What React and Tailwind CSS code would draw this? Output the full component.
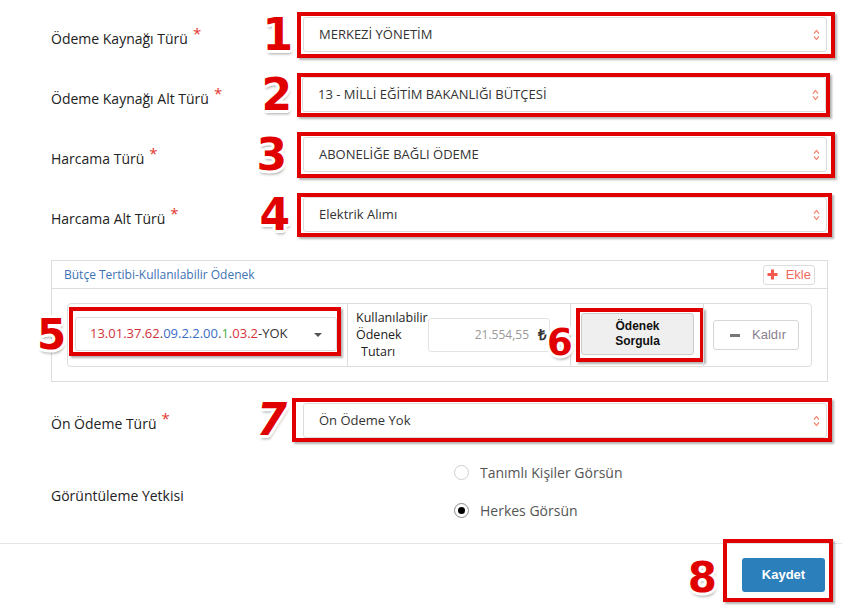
import React from 'react';

const OPEN = "font-['Open_Sans',sans-serif]";
const ARIAL = "font-['Liberation_Sans',Arial,sans-serif]";

// red annotation digit with white outline and soft grey drop shadow
const Num = ({ n, className = '' }) => (
  <span
    className={`font-['DejaVu_Sans',sans-serif] font-bold leading-none text-[#e10000] [text-shadow:-2px_-2px_0_#fff,2px_-2px_0_#fff,-2px_2px_0_#fff,2px_2px_0_#fff,0_3px_0_#fff,3px_0_0_#fff,-3px_0_0_#fff,0_-3px_0_#fff,1px_4px_3px_rgba(0,0,0,0.35)] ${className}`}
  >
    {n}
  </span>
);

const Arrows = () => (
  <svg width="7" height="11" viewBox="0 0 7 11" className="absolute right-[6px] top-1/2 -translate-y-1/2">
    <path d="M1 4.2 L3.5 1 L6 4.2 M1 6.8 L3.5 10 L6 6.8" fill="none" stroke="#f2826f" strokeWidth="1.2" />
  </svg>
);

const Select = ({ value }) => (
  <div className={`relative flex items-center w-[524px] h-[35px] bg-white border border-[#dcdcdc] rounded-[3px] pl-[15px] text-[13px] text-[#333] ${OPEN}`}>
    {value}
    <Arrows />
  </div>
);

const Label = ({ text, className = '' }) => (
  <div className={`flex-1 text-[14px] font-medium text-[#222] ${OPEN} ${className}`}>
    {text}
    <sup className="text-[#e3342f] text-[15px] ml-[5px] top-[-5px]">*</sup>
  </div>
);

const rows = [
  { label: 'Ödeme Kaynağı Türü', n: '1', value: 'MERKEZİ YÖNETİM', box: 'pl-[2px] pr-[4px] pt-[1px] pb-[2px]', row: 'pr-[7px]', num: 'mr-[4px]' },
  { label: 'Ödeme Kaynağı Alt Türü', n: '2', value: '13 - MİLLİ EĞİTİM BAKANLIĞI BÜTÇESİ', box: 'pl-[1px] pr-0 pt-0 pb-[1px]', row: 'pr-[12px]', num: 'mr-[5px]' },
  { label: 'Harcama Türü', n: '3', value: 'ABONELİĞE BAĞLI ÖDEME', box: 'pl-[2px] pr-[4px] pt-[1px] pb-[2px]', row: 'pr-[7px]', num: 'mr-[10px]' },
  { label: 'Harcama Alt Türü', n: '4', value: 'Elektrik Alımı', box: 'pl-[2px] pr-[1px] pt-0 pb-[1px]', row: 'pr-[10px]', num: 'mr-[7px]' },
];

const Code = () => (
  <span>
    <span className="text-[#d0323a]">13.01.37.62</span>
    <span className="text-[#555]">.</span>
    <span className="text-[#3a6cc6]">09.2.2.00</span>
    <span className="text-[#555]">.</span>
    <span className="text-[#4cae4c]">1</span>
    <span className="text-[#555]">.</span>
    <span className="text-[#d8323a]">03.2</span>
    <span className="text-[#333]">-YOK</span>
  </span>
);

export default function App() {
  return (
    <div className="w-[842px] h-[608px] bg-white overflow-hidden">
      <div className="pt-[5px]">
        {rows.map((r) => (
          <div key={r.n} className={`flex items-center h-[60px] pl-[51px] ${r.row}`}>
            <Label text={r.label} className="mt-[6px]" />
            <Num n={r.n} className={`text-[44px] ${r.num}`} />
            <div className={`border-4 border-[#e10000] shadow-[2px_2px_2px_rgba(0,0,0,0.3)] ${r.box}`}>
              <Select value={r.value} />
            </div>
          </div>
        ))}
      </div>

      {/* budget panel */}
      <div className="mt-[15px] ml-[51px] w-[777px] border border-[#dddddd]">
        <div className="flex items-center justify-between h-[28px] border-b border-[#dddddd] pl-[12px] pr-[12px]">
          <span className={`text-[12px] text-[#3d72b5] ${OPEN}`}>Bütçe Tertibi-Kullanılabilir Ödenek</span>
          <button className={`flex items-center h-[20px] px-[3px] gap-[8px] border border-[#dddddd] rounded-[3px] text-[13px] text-[#f06a5f] ${ARIAL}`}>
            <svg width="11" height="11" viewBox="0 0 11 11">
              <path d="M5.5 0.5 V10.5 M0.5 5.5 H10.5" stroke="#f25a4f" strokeWidth="3" />
            </svg>
            Ekle
          </button>
        </div>
        <div className="px-[15px] py-[14px]">
          <div className="flex h-[64px] border border-[#dddddd] rounded-[4px]">
            <div className="relative w-[279px] pl-[1px] pt-[3px]">
              <Num n="5" className="absolute left-[-31px] top-[10px] text-[42px]" />
              <div className="w-[272px] border-4 border-[#e10000] shadow-[2px_2px_2px_rgba(0,0,0,0.3)] pl-[2px] pt-[6px] pb-[1px]">
                <div className={`relative flex items-center w-[262px] h-[34px] border border-[#dcdcdc] rounded-[3px] pl-[14px] text-[13px] ${OPEN}`}>
                  <Code />
                  <svg width="8" height="4" viewBox="0 0 8 4" className="absolute right-[14px] top-[15px]">
                    <path d="M0 0 H8 L4 4 Z" fill="#555" />
                  </svg>
                </div>
              </div>
            </div>
            <div className="relative w-[223px] border-l border-[#dddddd] flex items-start pl-[8px] pt-[5px]">
              <div className={`text-[12.5px] leading-[17px] text-[#222] ${OPEN}`}>
                <div>Kullanılabilir</div>
                <div>Ödenek</div>
                <div className="pl-[5px]">Tutarı</div>
              </div>
              <div className={`absolute left-[80px] top-[14px] w-[122px] h-[34px] border border-[#e3e3e3] rounded-[3px] flex items-center justify-end pr-[20px] text-[12px] text-[#999] ${OPEN}`}>
                21.554,55
              </div>
              <span className={`absolute left-[190px] top-[20px] text-[15px] font-bold text-[#333] ${ARIAL}`}>₺</span>
              <Num n="6" className="absolute left-[199px] top-[20px] text-[37px]" />
            </div>
            <div className="w-[133px] border-l border-[#dddddd] pl-[5px] pt-[4px]">
              <div className="w-[128px] border-4 border-[#e10000] shadow-[2px_2px_2px_rgba(0,0,0,0.3)] pl-px pt-px pb-[3px]">
                <button className={`w-[113px] h-[42px] bg-[#efefef] border border-[#cccccc] rounded-[3px] text-[12px] leading-[15px] font-bold text-[#111] ${ARIAL}`}>
                  Ödenek
                  <br />
                  Sorgula
                </button>
              </div>
            </div>
            <div className="flex-1 border-l border-[#dddddd] flex items-center pl-[9px]">
              <button className={`flex items-center w-[86px] h-[30px] border border-[#d6d6d6] rounded-[3px] pl-[16px] gap-[12px] text-[13px] text-[#8a8090] ${ARIAL}`}>
                <span className="w-[10px] h-[3px] bg-[#777]" />
                Kaldır
              </button>
            </div>
          </div>
        </div>
      </div>

      {/* advance payment */}
      <div className="mt-[8px] flex items-center h-[60px] pl-[51px] pr-[10px]">
        <Label text="Ön Ödeme Türü" className="mt-[6px]" />
        <Num n="7" className="text-[44px] mr-[5px] italic" />
        <div className="border-4 border-[#e10000] shadow-[2px_2px_2px_rgba(0,0,0,0.3)] pl-[7px] pr-px pt-px pb-0">
          <Select value="Ön Ödeme Yok" />
        </div>
      </div>

      {/* visibility */}
      <div className="flex items-center pl-[51px] mt-[3px]">
        <div className={`w-[403px] text-[14px] font-medium text-[#222] ${OPEN} mt-[8px]`}>Görüntüleme Yetkisi</div>
        <div className={`text-[14px] text-[#555] ${OPEN}`}>
          <div className="flex items-center h-[38px] gap-[11px]">
            <span className="w-[15px] h-[15px] rounded-full border border-[#cfcfcf]" />
            Tanımlı Kişiler Görsün
          </div>
          <div className="flex items-center h-[38px] gap-[11px]">
            <span className="w-[15px] h-[15px] rounded-full border border-[#8a8a8a] flex items-center justify-center">
              <span className="w-[7px] h-[7px] rounded-full bg-black" />
            </span>
            Herkes Görsün
          </div>
        </div>
      </div>

      {/* footer */}
      <div className="mt-[14px] border-t border-[#e5e5e5] flex justify-end items-start pr-[9px]">
        <Num n="8" className="text-[42px] mt-[13px] mr-[6px]" />
        <div className="-mt-[5px] border-4 border-[#e10000] shadow-[2px_2px_2px_rgba(0,0,0,0.3)] pl-[15px] pr-[4px] pt-[15px] pb-[6px]">
          <button className={`w-[83px] h-[34px] bg-[#2b7fba] rounded-[3px] text-white text-[13px] font-bold ${ARIAL}`}>Kaydet</button>
        </div>
      </div>
    </div>
  );
}
